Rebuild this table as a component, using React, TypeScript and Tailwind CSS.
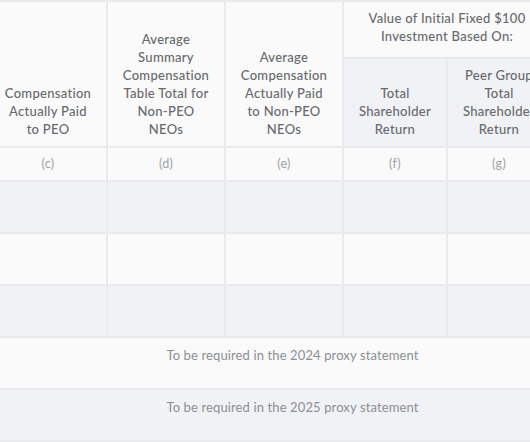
const font = { fontFamily: "Lato, 'Open Sans', sans-serif" };

const cell = "border-r-2 border-b-2 border-[#e9eaec] p-0";

function Lines({ items }: { items: string[] }) {
  return (
    <>
      {items.map((t, i) => (
        <div key={i} className="whitespace-nowrap">
          {t}
        </div>
      ))}
    </>
  );
}

function EmptyRow({ shade }: { shade: boolean }) {
  const bg = shade ? "bg-[#f0f2f5]" : "bg-[#fafafa]";
  return (
    <tr className="h-[52px]">
      {Array.from({ length: 6 }).map((_, i) => (
        <td key={i} className={`${cell} ${bg}`} />
      ))}
    </tr>
  );
}

function NoteRow({ year, shade }: { year: string; shade: boolean }) {
  const bg = shade ? "bg-[#f0f2f5]" : "bg-[#fafafa]";
  return (
    <tr className="h-[52px]">
      <td
        colSpan={6}
        className={`${cell} ${bg} border-r-0 pt-[8px] align-top text-center text-[13px] leading-[18px] tracking-[0.12px] text-[#8c8f94]`}
      >
        To be required in the {year} proxy statement
      </td>
    </tr>
  );
}

export default function App() {
  const head = "text-[13px] leading-[18px] font-medium tracking-[0.3px] text-[#67696d]";
  const letter = "text-center text-[12.5px] tracking-[0.3px] text-[#a0a2a6]";
  return (
    <div className="w-[530px] h-[442px] overflow-hidden bg-white" style={font}>
      <table className="ml-[-10px] w-[607px] table-fixed border-separate border-spacing-0 border-t-2 border-[#e9eaec]">
        <colgroup>
          <col className="w-[118px]" />
          <col className="w-[118px]" />
          <col className="w-[118px]" />
          <col className="w-[104px]" />
          <col className="w-[104px]" />
          <col className="w-[45px]" />
        </colgroup>
        <thead>
          <tr className="h-[57px]">
            <th rowSpan={2} className={`${cell} ${head} bg-[#fafafa] align-bottom pb-[8px]`}>
              <Lines items={["Compensation", "Actually Paid", "to PEO"]} />
            </th>
            <th rowSpan={2} className={`${cell} ${head} bg-[#fafafa] align-bottom pb-[8px]`}>
              <Lines
                items={["Average", "Summary", "Compensation", "Table Total for", "Non-PEO", "NEOs"]}
              />
            </th>
            <th rowSpan={2} className={`${cell} ${head} bg-[#fafafa] align-bottom pb-[8px]`}>
              <Lines items={["Average", "Compensation", "Actually Paid", "to Non-PEO", "NEOs"]} />
            </th>
            <th colSpan={3} className={`${cell} ${head} bg-[#fafafa] align-middle pb-[5px] border-r-0`}>
              <div className="w-[206px] text-center">
                <Lines items={["Value of Initial Fixed $100", "Investment Based On:"]} />
              </div>
            </th>
          </tr>
          <tr className="h-[89px]">
            <th className={`${cell} ${head} bg-[#f0f2f5] align-bottom pb-[8px]`}>
              <Lines items={["Total", "Shareholder", "Return"]} />
            </th>
            <th className={`${cell} ${head} bg-[#f0f2f5] align-bottom pb-[8px]`}>
              <Lines items={["Peer Group", "Total", "Shareholder", "Return"]} />
            </th>
            <th className={`${cell} bg-[#f0f2f5]`} />
          </tr>
        </thead>
        <tbody>
          <tr className="h-[34px]">
            {["(c)", "(d)", "(e)", "(f)", "(g)", ""].map((l, i) => (
              <td key={i} className={`${cell} ${letter} bg-[#fafafa]`}>
                {l}
              </td>
            ))}
          </tr>
          <EmptyRow shade />
          <EmptyRow shade={false} />
          <EmptyRow shade />
          <NoteRow year="2024" shade={false} />
          <NoteRow year="2025" shade />
        </tbody>
      </table>
    </div>
  );
}
